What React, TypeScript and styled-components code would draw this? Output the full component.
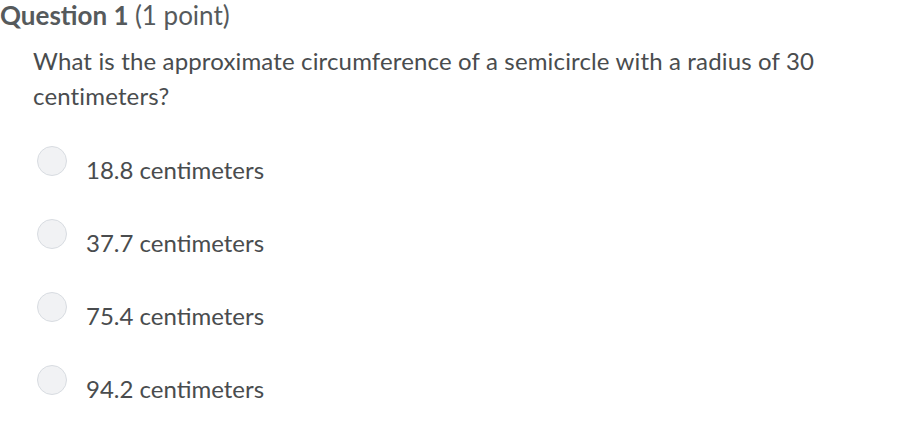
import React from "react";
import styled, { createGlobalStyle } from "styled-components";

const Global = createGlobalStyle`
  html, body { margin: 0; padding: 0; background: #ffffff; }
  body { font-family: Lato, "Open Sans", sans-serif; color: #494c4e; }
`;

const Page = styled.div`
  width: 917px;
  height: 441px;
  background: #ffffff;
  overflow: hidden;
`;

const Title = styled.h1`
  margin: 0;
  padding: 0;
  font-size: 26px;
  line-height: 31px;
  font-weight: 700;
  color: #565a5c;
`;

const Points = styled.span`
  font-weight: 400;
`;

const Prompt = styled.p`
  margin: 12px 0 0 33px;
  font-size: 24px;
  line-height: 35px;
  letter-spacing: 0.15px;
  color: #494c4e;
  width: 840px;
`;

const Options = styled.div`
  display: flex;
  flex-direction: column;
  gap: 43px;
  margin: 33px 0 0 37px;
`;

const Option = styled.label`
  display: flex;
  align-items: center;
  height: 30px;
  gap: 19px;
  cursor: pointer;
`;

const Radio = styled.span`
  width: 28px;
  height: 28px;
  border-radius: 50%;
  background: #f1f2f4;
  border: 1px solid #d8dce1;
  flex-shrink: 0;
`;

const OptionText = styled.span`
  font-size: 24px;
  color: #494c4e;
  position: relative;
  top: 8px;
`;

const answers = ["18.8 centimeters", "37.7 centimeters", "75.4 centimeters", "94.2 centimeters"];

export default function App() {
  return (
    <Page>
      <Global />
      <Title>
        Question 1 <Points>(1 point)</Points>
      </Title>
      <Prompt>
        What is the approximate circumference of a semicircle with a radius of 30 centimeters?
      </Prompt>
      <Options>
        {answers.map((a) => (
          <Option key={a}>
            <Radio />
            <OptionText>{a}</OptionText>
          </Option>
        ))}
      </Options>
    </Page>
  );
}
